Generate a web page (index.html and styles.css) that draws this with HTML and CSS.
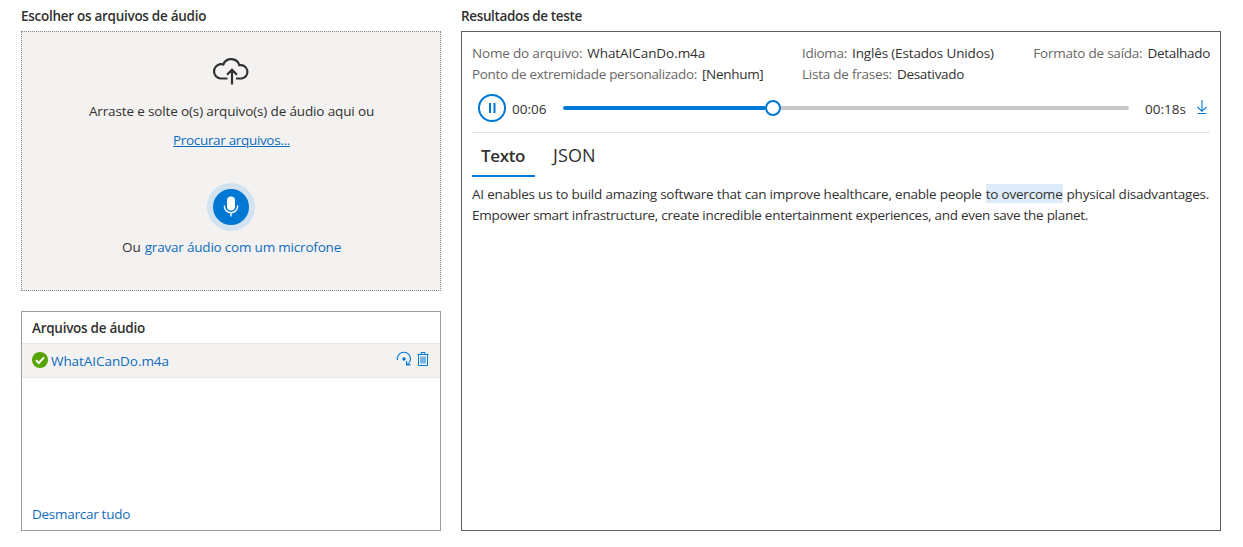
FILE: index.html
```html
<!DOCTYPE html>
<html lang="pt-BR">
<head>
<meta charset="utf-8">
<title>Fala em tempo real</title>
<link rel="stylesheet" href="styles.css">
</head>
<body>
<main class="page">
  <div class="left">
    <h2 class="heading"><span class="t t-choose">Escolher os arquivos de áudio</span></h2>
    <section class="dropzone">
      <svg class="cloud" width="38" height="28" viewBox="0 0 38 28" fill="none" stroke="#323130" stroke-width="2.2"><path d="M15.5 21.5H8.5A7.2 7.2 0 0 1 8.3 7.2Q9.8 7 11.3 7.5A8.5 8.5 0 0 1 27.3 8.2A6.7 6.7 0 1 1 30 21.5H24M20 27.5V12.7M15 17.7L20 12.7L25 17.7"/></svg>
      <p class="drop-text"><span class="t t-drag">Arraste e solte o(s) arquivo(s) de áudio aqui ou</span></p>
      <a class="browse link"><span class="t t-browse">Procurar arquivos...</span></a>
      <div class="mic"><svg width="16" height="22" viewBox="0 0 16 22"><rect x="4" y="0.5" width="8" height="14" rx="4" fill="#fff"/><path d="M1.4 9.5V10.5A6.6 6.2 0 0 0 14.6 10.5V9.5M8 16.7V20.5" fill="none" stroke="#fff" stroke-width="1.4"/></svg></div>
      <p class="record"><span class="t">Ou</span><a class="link t t-record">gravar áudio com um microfone</a></p>
    </section>
    <section class="files">
      <h3 class="files-title"><span class="t t-files">Arquivos de áudio</span></h3>
      <div class="file-row">
        <svg width="16" height="16" viewBox="0 0 16 16"><circle cx="8" cy="8" r="8" fill="#57a300"/><path d="M4 8.2L6.8 11L12 5.4" fill="none" stroke="#fff" stroke-width="2"/></svg>
        <a class="file-name link t t-name">WhatAICanDo.m4a</a>
        <svg class="redo" width="16" height="16" viewBox="0 0 16 16" fill="none" stroke="#0078d4" stroke-width="1.1"><path d="M1.4 9A6.6 6.6 0 1 1 11.4 13.4M10.6 10V13.9H14.6"/><circle cx="8" cy="8" r="1.7" fill="#0078d4" stroke="none"/></svg>
        <svg class="trash" width="12" height="16" viewBox="0 0 12 16" fill="none" stroke="#0078d4"><path d="M0.5 3.5H11.5M4 3V1.5H8V3M1.5 4V14.5H10.5V4M4 5.5V12.5M6 5.5V12.5M8 5.5V12.5"/></svg>
      </div>
      <a class="clear link"><span class="t t-clear">Desmarcar tudo</span></a>
    </section>
  </div>
  <div class="right">
    <h2 class="heading"><span class="t t-results">Resultados de teste</span></h2>
    <section class="results">
      <div class="meta">
        <div class="meta-file">
          <p><span class="label t t-m1">Nome do arquivo:</span><span class="t t-name">WhatAICanDo.m4a</span></p>
          <p><span class="label t t-m2">Ponto de extremidade personalizado:</span><span class="t t-m5">[Nenhum]</span></p>
        </div>
        <div class="meta-lang">
          <p><span class="label t t-m5">Idioma:</span><span class="t t-v3">Inglês (Estados Unidos)</span></p>
          <p><span class="label t t-m4">Lista de frases:</span><span class="t t-m5">Desativado</span></p>
        </div>
        <div class="meta-format">
          <p><span class="label t t-m4">Formato de saída:</span><span class="t t-m5">Detalhado</span></p>
        </div>
      </div>
      <div class="player">
        <svg class="pause" width="28" height="28" viewBox="0 0 28 28"><circle cx="14" cy="14" r="13" fill="#fff" stroke="#0078d4" stroke-width="2"/><path d="M12 9V19M16.5 9V19" stroke="#0078d4" stroke-width="2"/></svg>
        <span class="elapsed t">00:06</span>
        <div class="track"><div class="played"></div><div class="thumb"></div><div class="remaining"></div></div>
        <span class="total t">00:18s</span>
        <svg class="download" width="10" height="15" viewBox="0 0 10 15" fill="none" stroke="#0078d4" stroke-width="1.1"><path d="M5 0V11M0.6 7L5 11.3L9.4 7M0.5 13.5H9.5"/></svg>
      </div>
      <nav class="tabs">
        <span class="tab tab-active"><span class="t t-tab1">Texto</span></span>
        <span class="tab"><span class="t t-tab2">JSON</span></span>
      </nav>
      <div class="transcript">
        <p><span class="t t-l1">AI enables us to build amazing software that can improve healthcare, enable people</span><mark class="t t-l1">to overcome</mark><span class="t t-l1b">physical disadvantages.</span></p>
        <p><span class="t t-l2">Empower smart infrastructure, create incredible entertainment experiences, and even save the planet.</span></p>
      </div>
    </section>
  </div>
</main>
</body>
</html>
```
FILE: styles.css
```css
* { box-sizing: border-box; }
body { margin: 0; background: #fff; color: #323130; font: 13.5px/21px "Open Sans", "Noto Sans", sans-serif; }
h2, h3, p { margin: 0; font-size: inherit; font-weight: 600; }
p { font-weight: 400; display: flex; }
.t { white-space: nowrap; }
.link { color: #0f6cbd; }
.page { display: flex; gap: 20px; width: 1243px; height: 547px; padding: 6px 22px 16px 21px; }
.left { width: 420px; display: flex; flex-direction: column; }
.right { width: 760px; display: flex; flex-direction: column; }
.heading { height: 25px; }
.dropzone { height: 260px; background: #f3f2f1; border: 1px dotted #8a8886; display: flex; flex-direction: column; align-items: center; padding-top: 25px; }
.drop-text { margin-top: 16px; padding-left: 1px; }
.browse { margin-top: 8px; padding-left: 1px; text-decoration: underline; }
.mic { margin-top: 32px; width: 48px; height: 48px; border-radius: 50%; border: 6px solid #d2e2f0; background: #0078d4; display: flex; align-items: center; justify-content: center; }
.record { margin-top: 6px; gap: 4px; padding-left: 1px; }
.files { margin-top: 20px; height: 220px; border: 1px solid #a19f9d; display: flex; flex-direction: column; }
.files-title { height: 31px; padding: 6px 10px; }
.file-row { height: 35px; display: flex; align-items: center; padding: 0 11px 2px 10px; background: #f3f2f1; border: solid #e8e8e8; border-width: 1px 0; }
.file-name { margin-left: 3px; padding-top: 3px; }
.redo { margin-left: auto; margin-bottom: 2px; }
.trash { margin-left: 5px; margin-bottom: 2px; }
.clear { margin: auto 10px 5px; }
.results { height: 500px; border: 1px solid #605e5c; padding: 11px 10px 0; }
.meta { display: flex; }
.meta p { gap: 5px; }
.meta-file { flex: 0 0 330px; }
.meta-format { margin-left: auto; }
.label { color: #696765; }
.player { height: 48px; display: flex; align-items: center; border-bottom: 1px solid #e5e5e5; padding: 0 0 1px 6px; }
.elapsed { margin-left: 6px; width: 51px; padding-top: 2px; }
.track { display: flex; align-items: center; width: 566px; }
.played { width: 202px; height: 4px; border-radius: 2px 0 0 2px; background: #0078d4; }
.thumb { width: 16px; height: 16px; border-radius: 50%; border: 2px solid #0078d4; }
.remaining { flex: 1; height: 4px; border-radius: 0 2px 2px 0; background: #c8c6c4; }
.total { margin-left: 16px; padding-top: 2px; }
.download { margin-left: auto; margin-right: 3px; margin-bottom: 1px; }
.tabs { display: flex; height: 44px; font-size: 17.5px; gap: 8px; }
.tab { padding: 12px 9px 0 10px; }
.tab-active { padding-left: 9px; font-weight: 600; border-bottom: 2px solid #0078d4; width: 63px; }
.transcript { padding-top: 7px; }
.transcript p { gap: 4px; }
mark { background: #deecf9; color: inherit; height: 19px; }

/* Tracking */
.t-choose { letter-spacing: -0.28px; }
.t-drag { letter-spacing: -0.14px; }
.t-browse { letter-spacing: -0.33px; }
.t-record { letter-spacing: -0.2px; }
.t-files, .t-clear { letter-spacing: -0.27px; }
.t-name { letter-spacing: -0.06px; }
.t-results { letter-spacing: -0.36px; }
.t-m1 { letter-spacing: -0.18px; }
.t-m2 { letter-spacing: -0.32px; }
.t-v3 { letter-spacing: -0.15px; }
.t-m4 { letter-spacing: -0.23px; }
.t-m5 { letter-spacing: -0.3px; }
.t-tab1 { font-size: 17px; letter-spacing: -0.35px; }
.t-tab2 { font-size: 18px; letter-spacing: 0.1px; }
.t-l1 { letter-spacing: -0.205px; }
.t-l1b { letter-spacing: -0.22px; }
.t-l2 { letter-spacing: -0.28px; }
```
